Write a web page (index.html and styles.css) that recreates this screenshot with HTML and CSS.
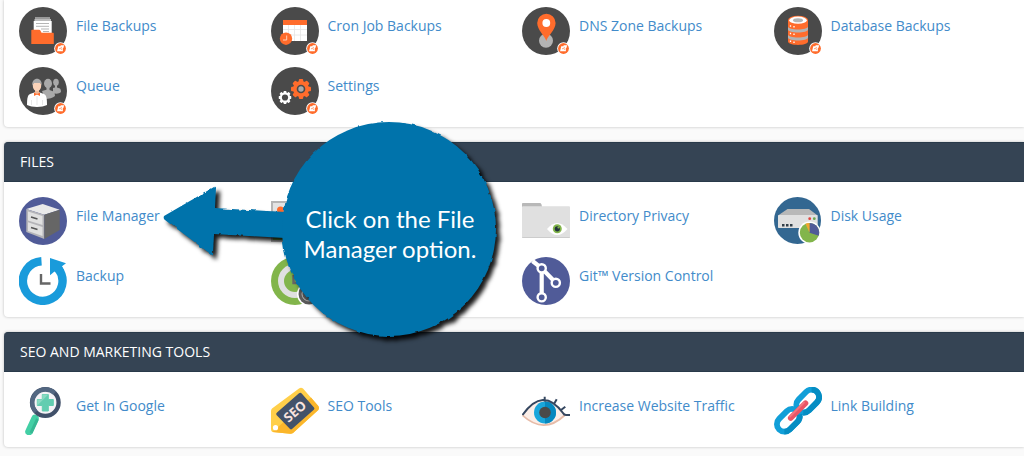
FILE: index.html
```html
<!DOCTYPE html>
<html lang="en">
<head>
    <meta charset="UTF-8">
    <meta name="viewport" content="width=device-width, initial-scale=1.0">
    <title>cPanel - Tools</title>
    <link rel="stylesheet" href="styles.css">
</head>
<body>
    <!-- Shared icon parts -->
    <svg class="defs" aria-hidden="true">
        <symbol id="badge" viewBox="0 0 14 14">
            <circle cx="7" cy="7" r="6.8" fill="#fff"/>
            <circle cx="7" cy="7" r="5.8" fill="#ff6c2c"/>
            <path d="M4.6 4.600h2.200l.5-1H11l-.8 2.700-.8.700.2 3H3.300z" fill="#fff"/>
            <path d="M5.400 7.200h1.400M8 5.300L7.300 7.400l1.100.8" stroke="#ff6c2c" stroke-width=".7" fill="none"/>
        </symbol>
        <symbol id="gear" viewBox="-10 -10 20 20">
            <g fill="currentColor">
                <rect x="-2.2" y="-10" width="4.4" height="20" rx="1"/>
                <rect x="-2.2" y="-10" width="4.4" height="20" rx="1" transform="rotate(45)"/>
                <rect x="-2.2" y="-10" width="4.4" height="20" rx="1" transform="rotate(90)"/>
                <rect x="-2.2" y="-10" width="4.4" height="20" rx="1" transform="rotate(135)"/>
                <circle r="8"/>
            </g>
        </symbol>
    </svg>

    <main>
        <section class="panel panel-backups">
            <div class="items">
                <a class="item" href="#">
                    <svg class="icon" viewBox="0 0 48 48">
                        <circle cx="24" cy="24" r="24" fill="#4a4a4a"/>
                        <path d="M16 10h15v5H16z" fill="#999"/>
                        <path d="M15.500 12h16.500v3h-16.500z" fill="#bbb"/>
                        <path d="M14.700 14h18v14h-18z" fill="#fff"/>
                        <path d="M17 16.500h13M17 19.300h13M22 22h8M24 24.500h6" stroke="#b5b5b5"/>
                        <path d="M12.300 23.500q0-.8.8-.8H20q1 0 1.500 1l1 2h11.500q.8 0 .8.800V37H12.300z" fill="#ff6c2c"/>
                        <use href="#badge" x="35" y="35" width="13" height="13"/>
                    </svg>
                    <span>File Backups</span>
                </a>
                <a class="item" href="#">
                    <svg class="icon" viewBox="0 0 48 48">
                        <circle cx="24" cy="24" r="24" fill="#4a4a4a"/>
                        <path d="M12 13h24v21H12z" fill="#fff"/>
                        <path d="M12 13h24v5H12z" fill="#ff6c2c"/>
                        <path d="M12 22.500h24M12 28h24M17.500 18v16M23.500 18v16M29.500 18v16" stroke="#e4e4e4" stroke-width=".8"/>
                        <circle cx="15" cy="31.700" r="6.200" fill="#ff6c2c"/>
                        <path d="M15.700 28.500V33H12" stroke="#ffd0b8" fill="none"/>
                        <use href="#badge" x="35" y="35" width="13" height="13"/>
                    </svg>
                    <span>Cron Job Backups</span>
                </a>
                <a class="item" href="#">
                    <svg class="icon" viewBox="0 0 48 48">
                        <circle cx="24" cy="24" r="24" fill="#4a4a4a"/>
                        <circle cx="24" cy="33.700" r="7" fill="#b3b3b3"/>
                        <path d="M24.300 34C23 29 15.200 23 15.200 16a9.200 9.200 0 0 1 18.400 0C33.600 23 25.600 29 24.300 34z" fill="#ff6c2c"/>
                        <circle cx="24.300" cy="16" r="3.900" fill="#fff"/>
                        <use href="#badge" x="35" y="35" width="13" height="13"/>
                    </svg>
                    <span>DNS Zone Backups</span>
                </a>
                <a class="item" href="#">
                    <svg class="icon" viewBox="0 0 48 48">
                        <circle cx="24" cy="24" r="24" fill="#4a4a4a"/>
                        <path d="M14 13v21.500c0 4.500 20 4.500 20 0V13z" fill="#ff6c2c"/>
                        <path d="M14 19.500c0 4 20 4 20 0v3c0 4-20 4-20 0zM14 27.500c0 4 20 4 20 0v3c0 4-20 4-20 0z" fill="#b3b3b3"/>
                        <ellipse cx="24" cy="13.200" rx="10" ry="4.400" fill="#ff6c2c"/>
                        <ellipse cx="24" cy="13.200" rx="8.800" ry="3.600" fill="#fff"/>
                        <ellipse cx="24" cy="13.200" rx="5" ry="2" fill="#b3b3b3"/>
                        <path d="M16.500 18.200v1.500M20 19v1.500M16.500 25.700v1.500M20 26.500v1.500M16.500 33.500V35M20 34.500V36" stroke="#fff" stroke-width="1.300"/>
                        <use href="#badge" x="35" y="35" width="13" height="13"/>
                    </svg>
                    <span>Database Backups</span>
                </a>
                <a class="item" href="#">
                    <svg class="icon" viewBox="0 0 48 48">
                        <circle cx="24" cy="24" r="24" fill="#4a4a4a"/>
                        <g fill="#a9a9a9">
                            <ellipse cx="37" cy="15.300" rx="2.800" ry="3.500"/>
                            <path d="M36 18h2v2.500l3 1q1 .5 1 3.500c-2 2-5 2-8 1v-5l2-.5z"/>
                            <ellipse cx="29" cy="16.500" rx="4" ry="4.700"/>
                            <path d="M27.500 20h3v3l4 1.500q1.500 1 1.500 4.500c-2 2-6 3-10 3l-3-8 4.500-1.200z"/>
                        </g>
                        <path d="M8 38c0-8 1-10 3-11l5-1.700h4l5 1.700c2 1 3 3 3 11-5 2.500-15 2.500-20 0z" fill="#fff"/>
                        <path d="M16 22h4v4l-2 2-2-2z" fill="#eeb695"/>
                        <ellipse cx="18" cy="18.700" rx="4.200" ry="5.300" fill="#fbd3b9"/>
                        <path d="M13.300 18.500c-1-9 10.500-9 9.400 0l-1.300-2.500h-6.500z" fill="#aaa"/>
                        <path d="M15 25.500l3 1.500 3-1.500v3.500l-3-1.500-3 1.500z" fill="#ff6c2c"/>
                        <path d="M18 29v9M12.500 33v5M23.500 33v5" stroke="#ddd" stroke-width=".7"/>
                        <use href="#badge" x="35" y="35" width="13" height="13"/>
                    </svg>
                    <span>Queue</span>
                </a>
                <a class="item" href="#">
                    <svg class="icon" viewBox="0 0 48 48">
                        <circle cx="24" cy="24" r="24" fill="#4a4a4a"/>
                        <use href="#gear" x="20" y="12" width="20" height="20" color="#ff6c2c"/>
                        <circle cx="30" cy="22" r="4.300" fill="#4a4a4a"/>
                        <circle cx="30" cy="22" r="2.700" fill="#aaa"/>
                        <use href="#gear" x="7.500" y="24" width="13" height="13" color="#fff"/>
                        <circle cx="14" cy="30.500" r="3.100" fill="#4a4a4a"/>
                        <use href="#badge" x="35" y="35" width="13" height="13"/>
                    </svg>
                    <span>Settings</span>
                </a>
            </div>
        </section>

        <section class="panel">
            <h2>FILES</h2>
            <div class="items">
                <a class="item" href="#">
                    <svg class="icon" viewBox="0 0 48 48">
                        <circle cx="24" cy="24" r="24" fill="#505b98"/>
                        <path d="M7.300 12l16.400-5 17 5.700-15.400 5z" fill="#e9e9e9"/>
                        <path d="M7.300 12l18 5.700V42l-18-7z" fill="#b4b4b8"/>
                        <path d="M25.300 17.700l15.400-5V33l-15.400 9z" fill="#666"/>
                        <path d="M9 14.500l14.500 4.600v9L9 23.500zM9 25.300l14.500 4.700v9L9 34z" fill="#e0e0e0"/>
                        <path d="M12 20l6.500 2M12 30.500l6.500 2" stroke="#555" stroke-width="1.600"/>
                    </svg>
                    <span>File Manager</span>
                </a>
                <a class="item" href="#" aria-label="Images">
                    <svg class="icon" viewBox="0 0 48 48">
                        <path d="M0 4h48v41H0z" fill="#b5b5b5"/>
                        <path d="M2 6h44v37H2z" fill="#e3e3e3"/>
                        <circle cx="9.500" cy="13" r="3.500" fill="#ff6c2c"/>
                        <path d="M2 40l14-17 12 17 8-9 10 10v2H2z" fill="#82b54b"/>
                    </svg>
                </a>
                <a class="item" href="#">
                    <svg class="icon" viewBox="0 0 48 48">
                        <path d="M0 6.800Q0 6 .8 6h17.400q.8 0 1.300 1.500L20 10H0z" fill="#b8b8b8"/>
                        <rect y="9.300" width="48" height="31.700" rx="1" fill="#e0e0e0"/>
                        <path d="M0 40h48q0 1-1 1H1q-1 0-1-1z" fill="#ccc"/>
                        <path d="M25 32q10-12 20.500 0-10.500 12-20.500 0z" fill="#fff"/>
                        <circle cx="35.300" cy="31.800" r="4.500" fill="#82b54b"/>
                        <circle cx="35.300" cy="31.800" r="2.600" fill="#22323c"/>
                        <circle cx="36.500" cy="30.500" r="1.100" fill="#82b54b"/>
                    </svg>
                    <span>Directory Privacy</span>
                </a>
                <a class="item" href="#">
                    <svg class="icon" viewBox="0 0 48 48">
                        <circle cx="23.500" cy="23.500" r="23.500" fill="#336791"/>
                        <path d="M4 18.500L13.500 12H35l8.700 6.500z" fill="#b8b8b8"/>
                        <rect x="4" y="18" width="39.700" height="13" rx=".8" fill="#e0e0e0"/>
                        <circle cx="35.700" cy="21.700" r="1.400" fill="#e0443e"/>
                        <circle cx="40.300" cy="21.700" r="1.400" fill="#6aa84f"/>
                        <path d="M8 27h2.500v2.500H8zM12 27h2.500v2.500H12zM16 27h2.500v2.500H16z" fill="#333f48"/>
                        <circle cx="35.500" cy="35.700" r="11.200" fill="#fff"/>
                        <circle cx="35.500" cy="35.700" r="9.700" fill="#82b54b"/>
                        <path d="M35.500 35.700V26a9.700 9.700 0 0 1 9.200 12.800z" fill="#505b98"/>
                        <path d="M35.500 35.700l-4-8.900a9.700 9.700 0 0 1 4-.8z" fill="#f3a52f"/>
                    </svg>
                    <span>Disk Usage</span>
                </a>
                <a class="item" href="#">
                    <svg class="icon" viewBox="0 0 48 48">
                        <path d="M22.500 4.200A19.800 19.800 0 1 0 39.500 12" stroke="#199bdb" stroke-width="8.400" fill="none"/>
                        <path d="M31 1l16 5.300-4 2.900 2 3.800-7 3.500-2.500-2L31 18.300z" fill="#199bdb"/>
                        <path d="M22 17v9.500h9.500" stroke="#666" stroke-width="2.400" fill="none"/>
                    </svg>
                    <span>Backup</span>
                </a>
                <a class="item" href="#" aria-label="Backup Wizard">
                    <svg class="icon" viewBox="0 0 48 48">
                        <circle cx="24" cy="24" r="24" fill="#82b54b"/>
                        <circle cx="24" cy="24" r="17" fill="#e0e0e0"/>
                        <circle cx="24" cy="24" r="11" fill="#82b54b"/>
                        <path d="M22.500 18v8H31" stroke="#666" stroke-width="2.400" fill="none"/>
                        <circle cx="38" cy="37" r="12" fill="#fff"/>
                        <circle cx="38" cy="37" r="10.500" fill="#5b5b5b"/>
                        <circle cx="38" cy="37" r="7" stroke="#bbb" fill="none"/>
                    </svg>
                </a>
                <a class="item" href="#">
                    <svg class="icon" viewBox="0 0 48 48">
                        <circle cx="24" cy="24" r="24" fill="#505b98"/>
                        <path d="M10.500 4l9.200 7.300 14 14.400M19.700 11.300v29" stroke="#fff" stroke-width="4.200" fill="none"/>
                        <g fill="#505b98" stroke="#fff" stroke-width="2.400">
                            <circle cx="19.700" cy="11.300" r="4.100"/>
                            <circle cx="33.800" cy="25.800" r="4.100"/>
                            <circle cx="19.700" cy="40.300" r="4.100"/>
                        </g>
                    </svg>
                    <span>Git™ Version Control</span>
                </a>
            </div>

            <!-- Instruction bubble pointing at File Manager -->
            <div class="callout">
                <svg class="callout-shape" viewBox="0 0 340 224" aria-hidden="true">
                    <filter id="rough" x="-5%" y="-5%" width="110%" height="110%">
                        <feTurbulence type="fractalNoise" baseFrequency=".12" numOctaves="2" seed="4"/>
                        <feDisplacementMap in="SourceGraphic" scale="3" xChannelSelector="R" yChannelSelector="G"/>
                    </filter>
                    <g fill="#0073ab" filter="url(#rough)">
                        <path d="M1 94q-1 3 1 4l47 35q1 1 1-1l1-20 71 4V90l-70-4 1-20q0-2-2-1z"/>
                        <circle cx="226" cy="107" r="107"/>
                    </g>
                </svg>
                <p>Click on the File<br>Manager option.</p>
            </div>
        </section>

        <section class="panel">
            <h2>SEO AND MARKETING TOOLS</h2>
            <div class="items">
                <a class="item" href="#">
                    <svg class="icon" viewBox="0 0 48 48">
                        <path d="M16 31.500L10 44.500" stroke="#43cfa5" stroke-width="7.500" stroke-linecap="round"/>
                        <path d="M18.500 32L12 46" stroke="#36b893" stroke-width="3"/>
                        <circle cx="26.300" cy="15.500" r="13.500" fill="#f5f3f6"/>
                        <path d="M23.300 7.500h6v5h5v6h-5v5.500h-6v-5.500h-5v-6h5z" fill="#62cdb0" stroke="#62cdb0" stroke-linejoin="round"/>
                        <path d="M23.300 7.500h6L18.300 18.500v-6h5z" fill="#8bdac3"/>
                        <circle cx="26.300" cy="15.500" r="13.300" fill="none" stroke="#405069" stroke-width="4.300"/>
                        <path d="M16.900 24.900A13.300 13.300 0 0 1 35.700 6.100" fill="none" stroke="#536781" stroke-width="4.300"/>
                    </svg>
                    <span>Get In Google</span>
                </a>
                <a class="item" href="#">
                    <svg class="icon" viewBox="0 0 48 48">
                        <path d="M0 24q0-1.500 1-2.500L28 1.500q2-1.500 4 0L47.300 19q1.300 2 0 4L22 46q-1 1-3 .8L1.500 45Q0 44.500 0 42z" fill="#ffcf4a"/>
                        <path d="M40 10.500l7.300 8.500q1.300 2 0 4L22 46q-1 1-3 .8L1.500 45z" fill="#fbb62b"/>
                        <path d="M6 25.500L28 6.300q1.500-1 2.700.2L43 20.500q1 1.200-.2 2.300L21 42q-1 1-2.200-.3L5.500 28q-1-1.300.5-2.500z" fill="#435269"/>
                        <circle cx="4.500" cy="40.700" r="2.600" fill="#fff"/>
                        <text class="seo-text" x="24" y="29" transform="rotate(-41 24 24.500)">SEO</text>
                    </svg>
                    <span>SEO Tools</span>
                </a>
                <a class="item" href="#">
                    <svg class="icon" viewBox="0 0 48 48">
                        <path d="M.5 28.300Q22-1 44 28 22 48 .5 28.300z" fill="#fbeee8"/>
                        <path d="M.5 28.300Q22 48 43 28" stroke="#e7bca9" stroke-width="1.800" fill="none"/>
                        <circle cx="23" cy="25.500" r="11" fill="#1aa6db"/>
                        <path d="M23 14.500a11 11 0 0 1 0 22z" fill="#0688bf"/>
                        <circle cx="23" cy="25.500" r="5.800" fill="#4a4a4a"/>
                        <path d="M.5 28Q21-1 41 26q1 2 3 2h4M22.700 9.700v5M34.700 12.300L32 17M43.300 19.700L39 23" stroke="#354760" stroke-width="2" fill="none"/>
                    </svg>
                    <span>Increase Website Traffic</span>
                </a>
                <a class="item" href="#">
                    <svg class="icon" viewBox="0 0 48 48">
                        <g fill="none" stroke-width="5.800">
                            <rect x="-13" y="-7.500" width="26" height="15" rx="7.500" stroke="#119fd8" transform="translate(33.700 14) rotate(-45)"/>
                            <path d="M-11.500 5.200Q-9.500 7.500-5.500 7.500H5.500A7.500 7.500 0 0 0 10.800-5.300" stroke="#058dc3" transform="translate(33.700 14) rotate(-45)"/>
                            <rect x="-13" y="-7.500" width="26" height="15" rx="7.500" stroke="#119fd8" transform="translate(14.300 33.300) rotate(-45)"/>
                            <path d="M-10.800 5.300A7.500 7.500 0 0 0-5.500 7.500H5.500A7.500 7.500 0 0 0 12 3.700" stroke="#058dc3" transform="translate(14.300 33.300) rotate(-45)"/>
                        </g>
                        <path d="M16.700 31L31.500 16.300" stroke="#e95566" stroke-width="5.600" stroke-linecap="round"/>
                        <path d="M16 29.500L30 15.500" stroke="#f37580" stroke-width="1.800" stroke-linecap="round"/>
                    </svg>
                    <span>Link Building</span>
                </a>
            </div>
        </section>
    </main>
</body>
</html>
```

FILE: styles.css
```css
* {
    box-sizing: border-box;
}
body {
    font-family: "Open Sans", Arial, sans-serif;
    font-size: 14px;
    line-height: 20px;
    margin: 0;
    background-color: #fafafa;
    color: #333;
    overflow-x: hidden;
}
.defs {
    position: absolute;
    width: 0;
    height: 0;
}
main {
    display: flex;
    flex-direction: column;
    gap: 15px;
    padding: 0 0 9px 4px;
}
.panel {
    position: relative;
    background-color: #fff;
    border-radius: 4px 0 0 4px;
    box-shadow: 0 0 3px rgba(0,0,0,0.25);
}
.panel h2 {
    margin: 0;
    padding: 10px 16px;
    height: 40px;
    background-color: #354454;
    border: 1px solid #293a4a;
    border-width: 1px 0;
    border-radius: 4px 0 0 0;
    color: #fff;
    font-size: 14px;
    font-weight: normal;
    line-height: 18px;
}
.items {
    display: grid;
    grid-template-columns: repeat(4, 1fr);
    gap: 12px 1px;
    padding: 15px 0 12px 15px;
}
.panel-backups {
    border-top-left-radius: 0;
}
.panel-backups .items {
    padding-top: 7px;
}
.item {
    display: flex;
    gap: 9px;
    color: #428bca;
    text-decoration: none;
}
.item:hover {
    text-decoration: underline;
}
.item span {
    padding-top: 9px;
}
.icon {
    width: 48px;
    height: 48px;
    flex-shrink: 0;
}
.seo-text {
    font-family: "Open Sans", Arial, sans-serif;
    font-size: 13px;
    font-weight: bold;
    fill: #f9e3df;
    text-anchor: middle;
}

/* Callout sits over the panel */
.callout {
    position: absolute;
    top: -20px;
    left: 159px;
    z-index: 2;
    width: 340px;
    height: 224px;
    pointer-events: none;
}
.callout-shape {
    display: block;
    width: 100%;
    height: 100%;
    overflow: visible;
    filter: drop-shadow(4px 4px 2px rgba(0,0,0,0.9));
}
.callout p {
    position: absolute;
    top: 82px;
    left: 120px;
    width: 214px;
    margin: 0;
    color: #fff;
    font-family: Lato, "Open Sans", sans-serif;
    font-size: 24px;
    line-height: 30px;
    text-align: center;
}
```
